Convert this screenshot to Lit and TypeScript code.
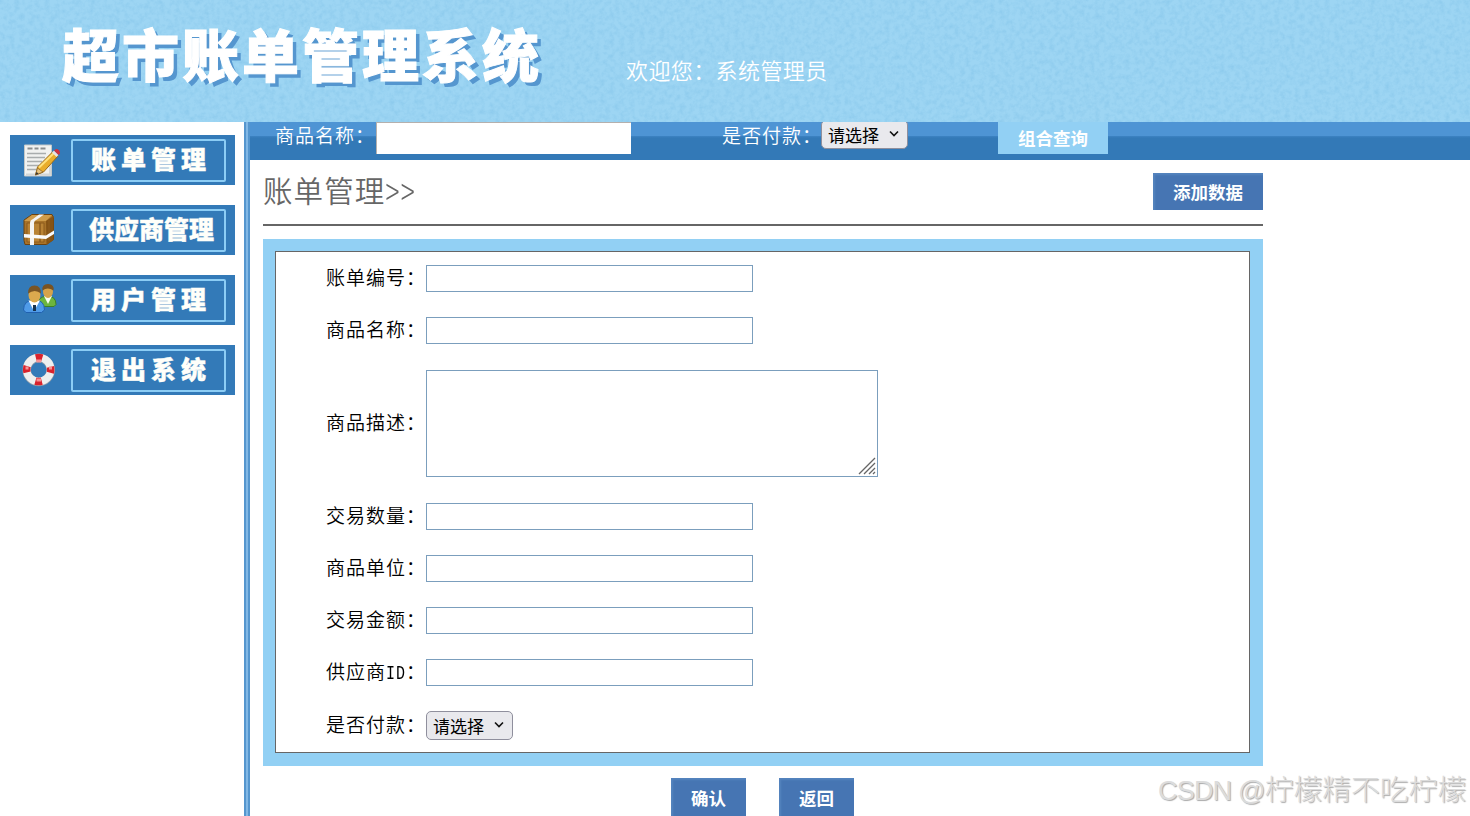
import {css, CSSResultGroup, html, LitElement, svg, SVGTemplateResult, TemplateResult} from "lit";
import {customElement, property} from "lit/decorators.js";
import {classMap} from "lit/directives/class-map.js";

interface MenuEntry {
    label: string;
    icon: string;
    tight?: boolean;
}

interface FormField {
    label: string | TemplateResult;
    type: string;
}

const MENU: MenuEntry[] = [
    {label: "账单管理", icon: "bill"},
    {label: "供应商管理", icon: "provider", tight: true},
    {label: "用户管理", icon: "users"},
    {label: "退出系统", icon: "exit"},
];

const FIELDS: FormField[] = [
    {label: "账单编号：", type: "text"},
    {label: "商品名称：", type: "text"},
    {label: "商品描述：", type: "area"},
    {label: "交易数量：", type: "text"},
    {label: "商品单位：", type: "text"},
    {label: "交易金额：", type: "text"},
    {label: html`供应商<span class="latin">ID</span>：`, type: "text"},
    {label: "是否付款：", type: "select"},
];

// All menu icons share a 40x40 box
const ICONS: Record<string, SVGTemplateResult> = {
    bill: svg`
        <path d="M4.500 5h27v31h-27z" fill="#f1f2f0" stroke="#c3c8c8"/>
        <path d="M7.500 8.500h5m2 0h4m2 0h5" stroke="#8a8d8e" stroke-width="2"/>
        <path d="M7 13.500h19M7 17.500h18M7 21.500h15M7 25.500h12M7 29.500h9" stroke="#a9adad" stroke-width="1.500"/>
        <path d="M6 34.500h24V19" fill="none" stroke="#d3d6d5" stroke-width="2"/>
        <path d="M15.500 35l2-8L33 11.500l5 4.500-14.500 16z" fill="#e9ad2b" stroke="#98691a"/>
        <path d="M19 27.500L34 13" stroke="#ffe17b" stroke-width="2"/>
        <path d="M15.500 35l2-7 5.500 4z" fill="#e8c37c" stroke="#8b6124" stroke-width=".7"/>
        <path d="M15.500 35l1-3 2 1.500z" fill="#333"/>
        <path d="M32 12.500l2-2 4.500 4.500-2 2z" fill="#e3e5e6"/>
        <path d="M34 10.500l2-1.500q4 0 4 4.500l-1.500 1.500z" fill="#cf3340"/>
    `,
    provider: svg`
        <path d="M4 10L12 4.500h20l1.500 3v22l-7 5H5l-1-4z" fill="#a87329" stroke="#6c4311"/>
        <path d="M4 11L12 5h20l-6 6z" fill="#cf9c4a"/>
        <path d="M26 11l7.500-5v24l-7 5z" fill="#855315"/>
        <path d="M7 13h17v19H7z" fill="#b98335" stroke="#8c5b1d"/>
        <path d="M20 13v19M29 10v21" stroke="#8c5b1d" stroke-width="1.500"/>
        <path d="M10 35V13q0-3 3-4l6-4.500h5l-7 5q-3 1-3 4v21.500z" fill="#f4f4f4"/>
        <path d="M4 24l22 1.500 8-5v3.500l-8 5-22-1.500z" fill="#fafafa"/>
    `,
    users: svg`
        <path d="M17 26q0-9 10-10 9 0 9 8.500l-2 2H18z" fill="#6cb53e" stroke="#3e8123"/>
        <path d="M24 16l4 8 4-8z" fill="#f6fff0"/>
        <ellipse cx="28" cy="11.500" rx="5" ry="6.500" fill="#d6a34b"/>
        <path d="M22.500 10.500q-1-6.500 5.500-6.500t5.500 6.500q-6-4-11 0z" fill="#795322"/>
        <path d="M3.500 30q0-10 11-10 10 0 10 10l-3 2.500H6z" fill="#4f9be8" stroke="#2161b0"/>
        <path d="M8.500 20.500L14 31l6-10.500z" fill="#fff"/>
        <path d="M13 25h3v6h-3z" fill="#17324e"/>
        <ellipse cx="14.500" cy="15" rx="6" ry="7.500" fill="#dba94e"/>
        <path d="M8 13.500q0-8 6.500-8t6.500 8q-6-5-13 0z" fill="#7a5524"/>
    `,
    exit: svg`
        <circle cx="18.700" cy="20" r="12" fill="none" stroke="#8b9aa8" stroke-width="8.500"/>
        <circle cx="18.700" cy="19.500" r="12" fill="none" stroke="#efefef" stroke-width="7.500"/>
        <circle cx="18.700" cy="19.500" r="12" fill="none" stroke="#d9222c" stroke-width="7.500"
            stroke-dasharray="6.500 12.350" stroke-dashoffset="3.250"/>
        <path d="M16.500 11h4.500M16.500 30h4.500M5.500 18h3M29 18h3" stroke="#f79394" stroke-width="3"/>
    `,
};

@customElement("bill-menu-item")
export class BillMenuItem extends LitElement {
    @property() public label: string = "";
    @property() public icon: string = "";
    @property({type: Boolean}) public tight: boolean = false;

    protected render(): TemplateResult {
        return html`
            <svg class="icon" viewBox="0 0 40 40">${ICONS[this.icon]}</svg>
            <div class=${classMap({label: true, tight: this.tight})}>${this.label}</div>
        `;
    }

    static get styles(): CSSResultGroup {
        return css`
            :host {
                display: flex;
                align-items: center;
                box-sizing: border-box;
                width: 225px;
                height: 50px;
                padding: 0 9px 0 10px;
                background: #337ab8;
            }

            .icon {
                width: 40px;
                height: 40px;
                flex: none;
            }

            .label {
                box-sizing: border-box;
                width: 155px;
                height: 43px;
                margin-left: 11px;
                padding-left: 18px;
                border: 2px solid #8ccdf5;
                border-radius: 2px;
                color: #fffffa;
                font: 900 25px/35px "Noto Sans CJK SC", sans-serif;
                letter-spacing: 5px;
                white-space: nowrap;
                -webkit-text-stroke: 0.4px #fffffa;
            }

            .label.tight {
                padding-left: 16px;
                letter-spacing: 0;
            }
        `;
    }
}

@customElement("bill-select")
export class BillSelect extends LitElement {
    protected render(): TemplateResult {
        return html`
            <span>请选择</span>
            <svg viewBox="0 0 12 8"><path d="M2 1.500l4 4 4-4"/></svg>
        `;
    }

    static get styles(): CSSResultGroup {
        return css`
            :host {
                display: flex;
                align-items: center;
                justify-content: space-between;
                box-sizing: border-box;
                width: 87px;
                height: 29px;
                padding: 0 7px 0 6px;
                border: 1px solid #8f8f9d;
                border-radius: 5px;
                background: #e9e9ed;
                color: #000;
                font: 17px/27px "Noto Sans CJK SC", sans-serif;
            }

            svg {
                width: 12px;
                height: 8px;
                margin-bottom: 1px;
                fill: none;
                stroke: #111;
                stroke-width: 1.6;
            }
        `;
    }
}

@customElement("app-root")
export class AppRoot extends LitElement {
    protected _renderControl(type: string): TemplateResult {
        if (type === "select")
            return html`<bill-select></bill-select>`;
        if (type === "area")
            return html`
                <div class="area">
                    <textarea></textarea>
                    <svg class="grip" viewBox="0 0 18 18">
                        <path d="M1 17L17 1M6 17L17 6M11 17l6-6M15 17l2-2"/>
                    </svg>
                </div>
            `;
        return html`<input class="text" type="text">`;
    }

    protected render(): TemplateResult {
        return html`
            <header>
                <svg class="texture" width="1470" height="122">
                    <filter id="paper" x="0" y="0" width="100%" height="100%" color-interpolation-filters="sRGB">
                        <feTurbulence type="fractalNoise" baseFrequency="0.2" numOctaves="3" seed="4"/>
                        <feColorMatrix values="0 0 0 0 0.38  0 0 0 0 0.68  0 0 0 0 0.86  1.6 0 0 0 -0.62"/>
                    </filter>
                    <rect width="1470" height="122" filter="url(#paper)"/>
                </svg>
                <h1>超市账单管理系统</h1>
                <div class="welcome">欢迎您：系统管理员</div>
            </header>
            <div class="body">
                <nav>
                    ${MENU.map(m => html`
                        <bill-menu-item .label=${m.label} .icon=${m.icon} .tight=${!!m.tight}></bill-menu-item>
                    `)}
                </nav>
                <div class="divider"></div>
                <main>
                    <div class="search">
                        <span class="caption">商品名称：</span>
                        <input class="query" type="text">
                        <span class="caption paid">是否付款：</span>
                        <bill-select class="query-select"></bill-select>
                        <button class="combine">组合查询</button>
                    </div>
                    <div class="content">
                        <div class="heading">
                            <h2>账单管理<span class="angle">&gt;&gt;</span></h2>
                            <button class="add">添加数据</button>
                        </div>
                        <div class="panel">
                            <form>
                                ${FIELDS.map(f => html`
                                    <div class="row">
                                        <label>${f.label}</label>
                                        ${this._renderControl(f.type)}
                                    </div>
                                `)}
                            </form>
                        </div>
                        <div class="actions">
                            <button>确认</button>
                            <button>返回</button>
                        </div>
                    </div>
                </main>
            </div>
            <div class="watermark"><span>CSDN @</span>柠檬精不吃柠檬</div>
        `;
    }

    static get styles(): CSSResultGroup {
        return css`
            :host {
                display: flex;
                flex-direction: column;
                position: relative;
                width: 1470px;
                height: 816px;
                overflow: hidden;
                background: #fff;
                font-family: "Noto Sans CJK SC", sans-serif;
            }

            header {
                display: flex;
                position: relative;
                z-index: 1;
                flex: none;
                height: 122px;
                background: #9dd5f3;
            }

            .texture {
                position: absolute;
                top: 0;
                left: 0;
                opacity: 0.3;
            }

            h1 {
                width: 563px;
                margin: 8px 0 0 62px;
                color: #fff;
                font-size: 57px;
                font-weight: 900;
                line-height: 88px;
                letter-spacing: 3px;
                white-space: nowrap;
                -webkit-text-stroke: 1px #fff;
                text-shadow: 4px 4px 0 #5596cf;
                z-index: 1;
            }

            .welcome {
                padding: 52px 0 0 1px;
                color: #fff;
                font-size: 22px;
                font-weight: 350;
                line-height: 34px;
                letter-spacing: 0.4px;
                z-index: 1;
            }

            .body {
                display: flex;
                flex: 1;
                min-height: 0;
            }

            nav {
                display: flex;
                flex-direction: column;
                flex: none;
                gap: 20px;
                box-sizing: border-box;
                width: 244px;
                padding: 13px 9px 0 10px;
            }

            .divider {
                flex: none;
                box-sizing: border-box;
                width: 6px;
                border: solid #5596ce;
                border-width: 0 2px;
                background: #82b8e5;
            }

            main {
                flex: 1;
                min-width: 0;
            }

            /* the select starts under the header, which paints over its top edge */
            .search {
                display: flex;
                align-items: flex-start;
                height: 38px;
                padding-left: 25px;
                background: linear-gradient(#4e94d4 0 14px, #3d83c3 14px, #3379b7 16px);
            }

            .caption {
                width: 101px;
                flex: none;
                color: #fff;
                font-size: 19px;
                font-weight: 350;
                line-height: 26px;
                letter-spacing: 1px;
                white-space: nowrap;
            }

            .query {
                box-sizing: border-box;
                width: 255px;
                height: 32px;
                padding: 0;
                border: solid #b5b0ad;
                border-width: 1px 0 0 1px;
                border-radius: 0;
                background: #fff;
            }

            .paid {
                width: 99px;
                margin-left: 91px;
            }

            .query-select {
                margin-top: -2px;
                flex: none;
            }

            button {
                padding: 0;
                border: 0;
                background: #4675b3;
                box-shadow: inset 2px 2px 2px #5584be;
                color: #fff;
                font: 700 17.5px "Noto Sans CJK SC", sans-serif;
            }

            .combine {
                width: 110px;
                height: 32px;
                margin-left: 90px;
                padding-bottom: 2px;
                background: #92d0f4;
                box-shadow: none;
            }

            .content {
                width: 1000px;
                margin-left: 13px;
            }

            .heading {
                display: flex;
                justify-content: space-between;
                box-sizing: border-box;
                height: 66px;
                padding-top: 13px;
                border-bottom: 2px solid #666;
            }

            h2 {
                display: flex;
                margin: 0;
                color: #666;
                font-size: 29.5px;
                font-weight: 350;
                line-height: 32px;
                letter-spacing: 1.1px;
            }

            .angle {
                margin-top: 4px;
                font-size: 26px;
                font-weight: 300;
                letter-spacing: 1.4px;
                transform: scaleY(1.5);
            }

            .add {
                width: 110px;
                height: 37px;
            }

            .panel {
                margin-top: 13px;
                padding: 12px 13px 13px 12px;
                background: #92d0f4;
            }

            form {
                display: flex;
                flex-direction: column;
                gap: 25px;
                box-sizing: border-box;
                height: 502px;
                padding: 13px 0 0 50px;
                border: 1px solid #666;
                background: #fff;
            }

            .row {
                display: flex;
                align-items: center;
                flex: none;
            }

            label {
                width: 100px;
                padding-bottom: 3px;
                color: #000;
                font-size: 19px;
                font-weight: 350;
                line-height: 24px;
                letter-spacing: 1px;
                white-space: nowrap;
            }

            .latin {
                display: inline-block;
                font-family: "Liberation Mono", monospace;
                font-size: 15px;
                line-height: 12px;
                transform: scaleY(1.4);
                transform-origin: 50% 80%;
            }

            .text {
                box-sizing: border-box;
                width: 327px;
                height: 27px;
                padding: 0;
                border: 1px solid #7b9ebd;
                background: #fff;
            }

            .area {
                position: relative;
                width: 452px;
                height: 107px;
                margin: 1px 0;
            }

            textarea {
                display: block;
                box-sizing: border-box;
                width: 100%;
                height: 100%;
                border: 1px solid #7b9ebd;
                resize: none;
            }

            .grip {
                position: absolute;
                right: 2px;
                bottom: 2px;
                width: 18px;
                height: 18px;
                stroke: #666;
                stroke-width: 1.3;
            }

            .actions {
                display: flex;
                gap: 33px;
                padding: 12px 0 0 408px;
            }

            .actions button {
                width: 75px;
                height: 38px;
            }

            .watermark {
                position: absolute;
                top: 768px;
                left: 1158px;
                color: #dcdcdc;
                font-size: 28.8px;
                font-weight: 300;
                line-height: 40px;
                white-space: nowrap;
                text-shadow: 1px 1px 1px #aaa;
            }

            .watermark span {
                font-family: "Liberation Sans", sans-serif;
                font-size: 27px;
                letter-spacing: -0.8px;
            }
        `;
    }
}
